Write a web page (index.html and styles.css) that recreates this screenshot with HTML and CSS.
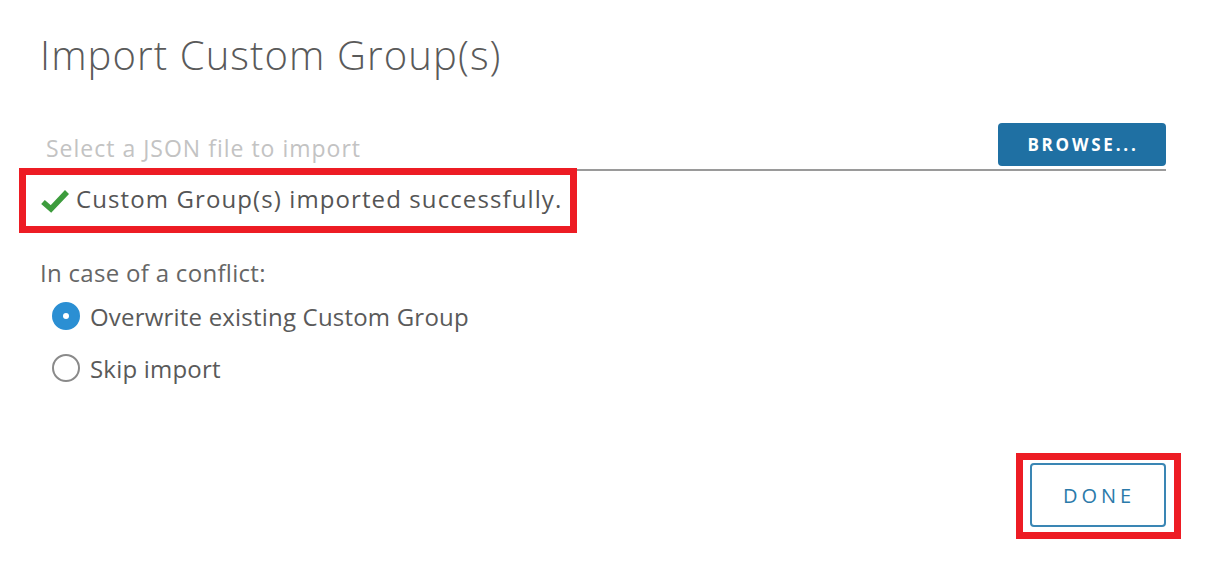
FILE: index.html
```html
<!DOCTYPE html>
<html>
<head>
<meta charset="utf-8">
<link rel="stylesheet" href="styles.css">
</head>
<body>
<div class="dialog">
  <h1 class="title">Import Custom Group(s)</h1>
  <div class="file-row">
    <span class="placeholder">Select a JSON file to import</span>
    <button class="btn-browse">BROWSE...</button>
  </div>
  <div class="message annot">
    <svg class="check" width="30" height="24" viewBox="0 0 30 24"><path d="M3 13 L11 20 L27 3" fill="none" stroke="#3d9c3d" stroke-width="5.5" stroke-linejoin="miter"/></svg>
    <span>Custom Group(s) imported successfully.</span>
  </div>
  <div class="conflict-label">In case of a conflict:</div>
  <div class="radios">
    <label class="radio"><span class="dot checked"></span><span>Overwrite existing Custom Group</span></label>
    <label class="radio"><span class="dot"></span><span>Skip import</span></label>
  </div>
  <div class="footer">
    <div class="annot done-wrap"><button class="btn-done">DONE</button></div>
  </div>
</div>
</body>
</html>
```
FILE: styles.css
```css
html, body { margin: 0; padding: 0; background: #fff; }
body { font-family: "Open Sans", Lato, sans-serif; color: #565656; width: 1207px; height: 561px; overflow: hidden; }
.dialog { padding: 27px 41px 0 40px; display: flex; flex-direction: column; }
.title { margin: 0; font-weight: 300; font-size: 40px; line-height: 56px; color: #5a5a5a; letter-spacing: 1.1px; }
.file-row { margin-top: 40px; display: flex; align-items: flex-start; justify-content: space-between; border-bottom: 2px solid #9a9a9a; height: 46px; }
.placeholder { font-size: 23px; color: #c3c3c3; padding: 9px 0 0 6px; letter-spacing: 1px; }
.btn-browse { margin: 0; height: 43px; width: 168px; background: #1f70a3; color: #fff; border: none; border-radius: 4px; font-family: inherit; font-weight: 700; font-size: 17px; letter-spacing: 2.8px; padding-left: 8px; }
.annot { border: 7px solid #ed1c24; }
.message { align-self: flex-start; margin: -3px 0 0 -21px; width: 530px; height: 51px; display: flex; align-items: center; gap: 6px; padding-left: 14px; box-sizing: content-box; font-size: 24px; letter-spacing: 1.1px; color: #555; }
.message span { margin-top: -4px; }
.check { flex: none; }
.conflict-label { margin-top: 23px; font-size: 24px; letter-spacing: 0.3px; color: #666; }
.radios { display: flex; flex-direction: column; gap: 22px; margin-top: 12px; padding-left: 12px; }
.radio { display: flex; align-items: center; gap: 10px; font-size: 24px; letter-spacing: 0.2px; color: #5a5a5a; height: 30px; }
.dot { width: 28px; height: 28px; border-radius: 50%; border: 2px solid #8a8a8a; box-sizing: border-box; position: relative; }
.dot.checked { background: #2b8fd3; border-color: #2b8fd3; }
.dot.checked::after { content: ""; position: absolute; left: 9px; top: 9px; width: 6px; height: 6px; border-radius: 50%; background: #fff; }
.footer { display: flex; justify-content: flex-end; margin: 70px -15px 0 0; }
.done-wrap { padding: 3px 8px 5px 7px; }
.btn-done { display: block; margin: 0; width: 136px; height: 64px; background: #fff; border: 2px solid #3a86b4; border-radius: 4px; color: #2b7aaa; font-family: inherit; font-size: 20px; letter-spacing: 4px; padding-left: 8px; }
```
